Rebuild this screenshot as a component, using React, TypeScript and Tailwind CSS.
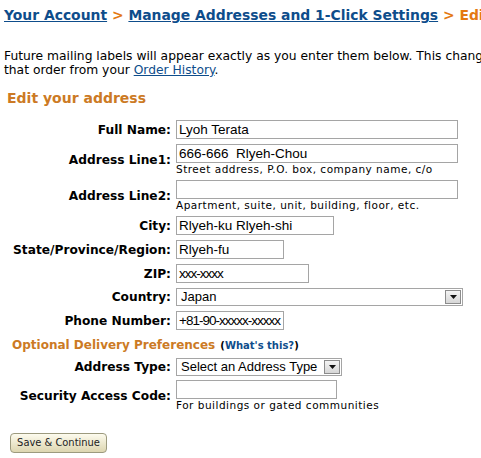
import React from "react";

const verdana = "font-['DejaVu_Sans',Verdana,sans-serif]";
const arial = "font-['Liberation_Sans',Arial,sans-serif]";

function Label({ text }: { text: string }) {
  return <div className={`w-[167px] shrink-0 text-right text-[12.2px] font-bold leading-[18px] text-black ${verdana}`}>{text}</div>;
}

function Field({ label, value = "", width, hint, tight }: { label: string; value?: string; width: string; hint?: string; tight?: boolean }) {
  return (
    <div className="flex items-center gap-[5px]">
      <Label text={label} />
      <div className="flex flex-col">
        <div
          className={`${width} h-[19px] overflow-hidden whitespace-pre border border-[#a5a5a5] bg-white px-[2px] text-[13.5px] leading-[17px] text-black ${arial} ${tight ? "tracking-[-1px]" : ""}`}
        >
          {value}
        </div>
        {hint && <div className={`h-[12px] whitespace-nowrap text-[10.5px] leading-[12px] tracking-[0.5px] text-black ${verdana}`}>{hint}</div>}
      </div>
    </div>
  );
}

function SelectBox({ label, value, width }: { label: string; value: string; width: string }) {
  return (
    <div className="flex items-center gap-[5px]">
      <Label text={label} />
      <div className={`${width} h-[18px] flex items-center justify-between border border-[#a5a5a5] bg-white pl-[4px] pr-[1px] text-[13px] text-black ${arial}`}>
        <span className="whitespace-nowrap leading-[16px]">{value}</span>
        <span className="flex h-[14px] w-[16px] shrink-0 items-center justify-center border border-[#8c8c8c] bg-gradient-to-b from-[#f4f4f4] to-[#d6d6d6]">
          <svg width="7" height="4" viewBox="0 0 7 4">
            <path d="M0 0 H7 L3.5 4 Z" fill="#111" />
          </svg>
        </span>
      </div>
    </div>
  );
}

export default function App() {
  return (
    <div className="h-[458px] w-[481px] overflow-hidden bg-white">
      <div className={`w-[680px] pl-[4px] pt-[5px] text-black ${verdana}`}>
        <div className="whitespace-nowrap text-[13.9px] font-bold leading-[20px]">
          <a className="text-[#0e4d8b] underline">Your Account</a>
          <span className="text-[#e47911]"> &gt; </span>
          <a className="text-[#0e4d8b] underline">Manage Addresses and 1-Click Settings</a>
          <span className="text-[#e47911]"> &gt; Edit Address</span>
        </div>

        <p className="mt-[24px] whitespace-nowrap text-[12.3px] leading-[14px]">
          Future mailing labels will appear exactly as you enter them below. This change does not affect open orders. To change one, go to
          <br />
          that order from your <a className="text-[#0e4d8b] underline">Order History</a>.
        </p>

        <h2 className="mt-[12px] pl-[3px] text-[14px] font-bold leading-[18px] text-[#cc7a24]">Edit your address</h2>

        <div className="mt-[13px] flex flex-col gap-[5px]">
          <Field label="Full Name:" value="Lyoh Terata" width="w-[282px]" />
          <Field label="Address Line1:" value="666-666  Rlyeh-Chou" width="w-[282px]" hint="Street address, P.O. box, company name, c/o" />
          <Field label="Address Line2:" width="w-[282px]" hint="Apartment, suite, unit, building, floor, etc." />
          <Field label="City:" value="Rlyeh-ku Rlyeh-shi" width="w-[158px]" />
          <Field label="State/Province/Region:" value="Rlyeh-fu" width="w-[108px]" />
          <Field label="ZIP:" value="xxx-xxxx" width="w-[133px]" tight />
          <SelectBox label="Country:" value="Japan" width="w-[287px]" />
          <Field label="Phone Number:" value="+81-90-xxxxx-xxxxx" width="w-[108px]" tight />
        </div>

        <div className="mt-[6px] whitespace-nowrap pl-[8px] leading-[16px]">
          <span className="text-[12px] font-bold text-[#cc7a24]">Optional Delivery Preferences</span>{" "}
          <span className="text-[10px] font-bold">
            (<a className="text-[#0e4d8b]">What's this?</a>)
          </span>
        </div>

        <div className="mt-[4px] flex flex-col gap-[4px]">
          <SelectBox label="Address Type:" value="Select an Address Type" width="w-[166px]" />
          <Field label="Security Access Code:" width="w-[161px]" hint="For buildings or gated communities" />
        </div>

        <button className="mt-[22px] ml-[6px] h-[20px] w-[97px] rounded-[4px] border border-[#9c9a7e] bg-gradient-to-b from-[#fdfbee] to-[#ddd6b0] text-[11px] leading-[18px] text-[#222] font-['Liberation_Sans_Narrow','DejaVu_Sans_Condensed',sans-serif]">
          Save &amp; Continue
        </button>
      </div>
    </div>
  );
}
